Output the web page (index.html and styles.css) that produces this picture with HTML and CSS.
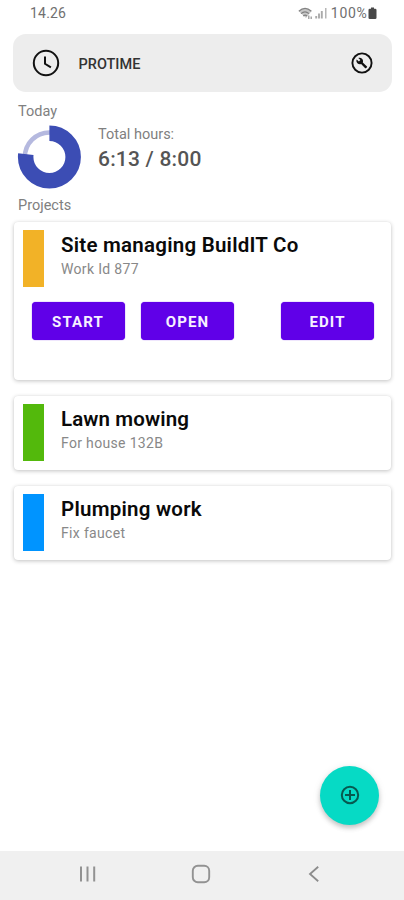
FILE: index.html
```html
<!DOCTYPE html>
<html lang="en">
<head>
<meta charset="utf-8">
<title>Protime</title>
<link rel="stylesheet" href="styles.css">
</head>
<body>
<div class="screen">
  <div class="status">
    <span class="time">14.26</span>
    <div class="indicators">
      <svg class="wifi" width="16" height="13" viewBox="0 0 16 13">
        <path d="M0.800 4.200Q7 -1.400 13.400 4.200L8 11Z" fill="#c8c8c8"/>
        <path d="M0.800 4.200Q7 -1.400 13.400 4.200M3 6.600Q7 3 11 6.600M5.200 9Q7.200 7.400 9 9" fill="none" stroke="#828282" stroke-width="1.200"/>
        <path d="M10.800 8.500v3.500M13.200 9.500v2.500" stroke="#999" stroke-width="1.300"/>
      </svg>
      <svg class="signal" width="12" height="12" viewBox="0 0 12 12">
        <path d="M1.200 9v2.500M4 6.500v5M6.800 4v7.500" stroke="#aaa" stroke-width="1.900"/>
        <path d="M10.800 1v10.500" stroke="#aaa" stroke-width="1.300"/>
      </svg>
      <span class="percent">100%</span>
      <svg class="battery" width="9" height="13" viewBox="0 0 9 13">
        <path d="M3 0.500h3v1.200h1.200a1.300 1.300 0 0 1 1.300 1.300v7.700a1.300 1.300 0 0 1-1.300 1.300H1.800a1.300 1.300 0 0 1-1.300-1.300V3a1.300 1.300 0 0 1 1.300-1.300H3z" fill="#484848"/>
      </svg>
    </div>
  </div>

  <header class="appbar">
    <svg width="28" height="28" viewBox="0 0 28 28" fill="none" stroke="#111" stroke-width="2">
      <circle cx="14" cy="14" r="12.200"/>
      <path d="M13 7.500v7.300l5.900 3.500"/>
    </svg>
    <h1>PROTIME</h1>
    <svg width="22" height="22" viewBox="0 0 22 22">
      <circle cx="11" cy="11" r="9.600" fill="none" stroke="#111" stroke-width="1.900"/>
      <path d="M16 14.500l-4.200-4.100c.5-1.300.2-2.700-.8-3.700-1-1-2.500-1.200-3.700-.7l2.100 2.100-1.500 1.500-2.200-2.100c-.6 1.200-.3 2.700.7 3.700 1 1 2.500 1.300 3.700.8l4.100 4.200c.2.200.5.200.7 0l1.100-1c.2-.2.200-.5 0-.7z" fill="#111"/>
    </svg>
  </header>

  <h2 class="label today">Today</h2>
  <section class="summary">
    <svg width="65" height="64" viewBox="0 0 65 64" fill="none">
      <circle cx="32.400" cy="32" r="24.500" stroke="#b5b9df" stroke-width="4.500"/>
      <circle cx="32.400" cy="32" r="23.750" stroke="#3c4db4" stroke-width="15.500" pathLength="100" stroke-dasharray="77 23" transform="rotate(-90 32.400 32)"/>
    </svg>
    <div class="hours">
      <span class="caption">Total hours:</span>
      <strong>6:13 / 8:00</strong>
    </div>
  </section>
  <h2 class="label projects">Projects</h2>

  <main class="cards">
    <article class="card open">
      <div class="info">
        <i class="swatch orange"></i>
        <div class="text"><h3>Site managing BuildIT Co</h3><p>Work Id 877</p></div>
      </div>
      <div class="actions">
        <button>START</button>
        <button>OPEN</button>
        <button class="edit">EDIT</button>
      </div>
    </article>
    <article class="card">
      <div class="info">
        <i class="swatch green"></i>
        <div class="text"><h3 class="snug">Lawn mowing</h3><p>For house 132B</p></div>
      </div>
    </article>
    <article class="card">
      <div class="info">
        <i class="swatch blue"></i>
        <div class="text"><h3>Plumping work</h3><p>Fix faucet</p></div>
      </div>
    </article>
  </main>

  <button class="fab" aria-label="Add project">
    <svg width="20" height="20" viewBox="0 0 20 20" fill="none" stroke="#07594f" stroke-width="2">
      <circle cx="10" cy="10" r="8.200"/>
      <path d="M10 5v10M5 10h10"/>
    </svg>
  </button>

  <nav class="navbar">
    <svg width="18" height="18" viewBox="0 0 18 18" stroke="#929292" stroke-width="2"><path d="M2 1.500v15M8.500 1.500v15M15.200 1.500v15"/></svg>
    <svg class="home" width="20" height="20" viewBox="0 0 20 20" fill="none" stroke="#929292" stroke-width="1.900"><rect x="1.800" y="1.800" width="16.400" height="16.400" rx="5"/></svg>
    <svg width="12" height="18" viewBox="0 0 12 18" fill="none" stroke="#8c8c8c" stroke-width="1.800"><path d="M10.200 1.800L2 9l8.200 7.200"/></svg>
  </nav>
</div>
</body>
</html>
```
FILE: styles.css
```css
* { box-sizing: border-box; margin: 0; padding: 0; }
body { background: #fff; font-family: Roboto, "Liberation Sans", sans-serif; }
.screen { position: relative; width: 404px; height: 900px; display: flex; flex-direction: column; overflow: hidden; }
.status { height: 34px; padding: 3px 27px 11px 30px; display: flex; justify-content: space-between; align-items: center; color: #707070; font-size: 14px; line-height: 20px; }
.time { letter-spacing: .2px; }
.indicators { display: flex; align-items: center; }
.signal { margin: 0 4px 0 1px; }
.percent { letter-spacing: .7px; margin-right: .5px; }
.appbar { height: 58px; margin: 0 12px 0 13px; padding: 0 19px; border-radius: 13px; background: #ededed; display: flex; align-items: center; }
.appbar h1 { flex: 1; margin-left: 18.500px; padding-top: 3px; font-size: 14.500px; font-weight: 500; line-height: 20px; color: #333; }
.label { font-size: 14.500px; line-height: 20px; font-weight: 400; color: #808080; padding-left: 18px; }
.today { margin-top: 10px; }
.summary { height: 70px; padding: 3px 0 0 17px; display: flex; }
.hours { margin-left: 16px; display: flex; flex-direction: column; }
.caption { font-size: 14.500px; line-height: 20px; color: #808080; }
.hours strong { margin-top: 1px; font-size: 21px; line-height: 26px; font-weight: 500; color: #555; letter-spacing: .2px; }
.projects { margin-top: 4px; }
.cards { margin: 6px 13px 0 14px; display: flex; flex-direction: column; gap: 16px; }
.card { height: 74px; border-radius: 4px; background: #fff; box-shadow: 0 1px 4px rgba(0,0,0,.24), 0 0 1px rgba(0,0,0,.08); padding: 8px 9px; }
.open { height: 158px; }
.info { display: flex; }
.swatch { width: 21px; height: 57px; }
.orange { background: #f2b227; }
.green { background: #53b90c; }
.blue { background: #0094ff; }
.text { margin-left: 17px; padding-top: 2px; }
.text h3 { font-size: 20.500px; line-height: 26px; font-weight: 600; color: #0a0a0a; white-space: nowrap; letter-spacing: .24px; }
.text h3.snug { letter-spacing: .12px; }
.text p { font-size: 14px; line-height: 20px; color: #888; margin-top: 1px; letter-spacing: .33px; }
.actions { display: flex; margin: 15px 8px 0 8.500px; }
.actions button { width: 93px; height: 38px; margin-right: 16.500px; border: 0; border-radius: 4px; background: #6000e8; color: #f6f0ff; font: 700 15px/38px Roboto, sans-serif; letter-spacing: 1.100px; padding-top: 1px; box-shadow: 0 0 1px #6000e8; }
.actions .edit { margin: 0 0 0 auto; }
.fab { position: absolute; left: 320px; top: 766px; width: 59px; height: 59px; border: 0; border-radius: 50%; background: #06dac5; box-shadow: 0 3px 5px rgba(0,0,0,.2), 0 1px 8px rgba(0,0,0,.08); display: flex; align-items: center; justify-content: center; padding-bottom: 1px; }
.navbar { margin-top: auto; height: 49px; background: #f0f0f0; padding: 0 84px 3px 79px; display: flex; justify-content: space-between; align-items: center; }
.home { margin-right: 4px; }
```
